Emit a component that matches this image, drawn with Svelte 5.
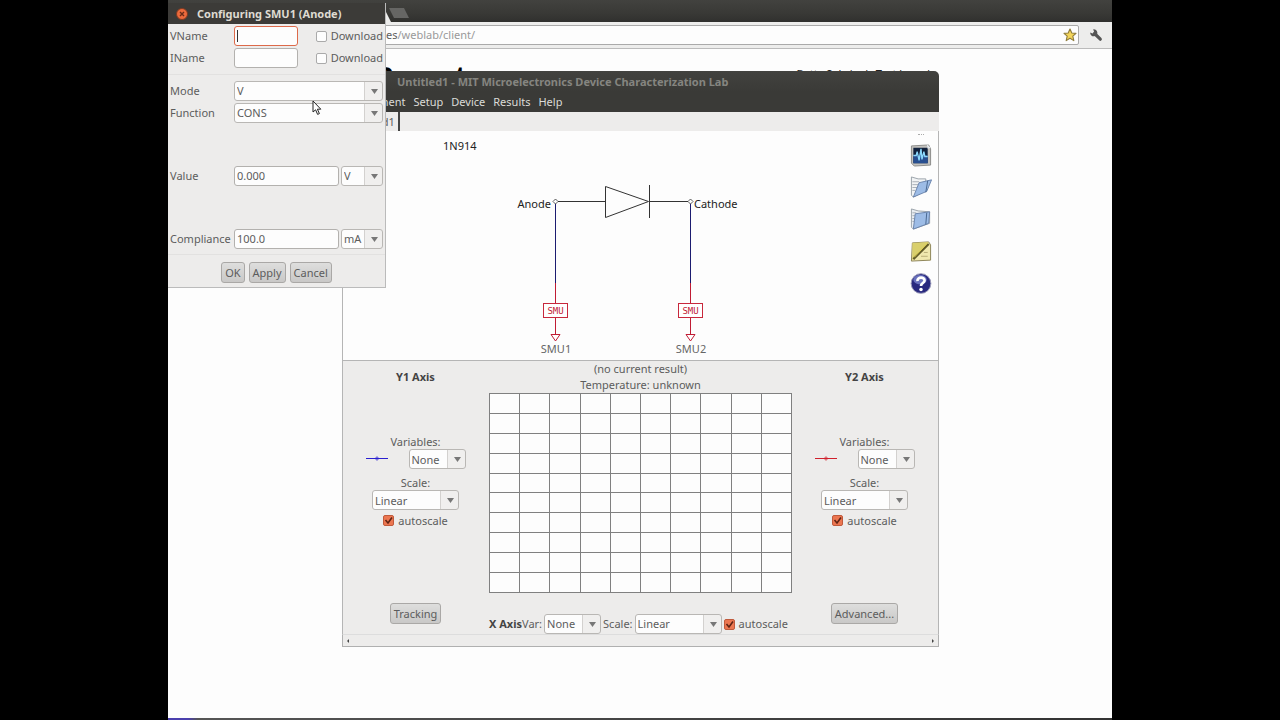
<script>
  let name = $state('Untitled1');
  let axes = $state([
    { id: 'y1', title: 'Y1 Axis', color: '#2a1fd0', action: 'Tracking', auto: true },
    { id: 'y2', title: 'Y2 Axis', color: '#d0202c', action: 'Advanced...', auto: true }
  ]);
  let xAuto = $state(true);
  const smus = [
    { x: 212, label: 'SMU1' },
    { x: 347, label: 'SMU2' }
  ];
  const menus = ['Experiment', 'Setup', 'Device', 'Results', 'Help'];
  const cells = Array.from({ length: 100 });
</script>

{#snippet axisPanel(axis)}
  <section class="axis">
    <h2>{axis.title}</h2>
    <div class="axis-controls">
      <label for="{axis.id}-var">Variables:</label>
      <div class="variable">
        <svg width="22" height="8" viewBox="0 0 22 8" aria-hidden="true">
          <path d="M0 3.5H22" stroke={axis.color} />
          <path d="M11 1L13.5 3.5L11 6L8.5 3.5Z" fill={axis.color} opacity="0.55" />
        </svg>
        <select id="{axis.id}-var" class="short"><option>None</option></select>
      </div>
      <label for="{axis.id}-scale" class="spaced">Scale:</label>
      <select id="{axis.id}-scale" class="long"><option>Linear</option></select>
      <label class="check"><input type="checkbox" bind:checked={axis.auto} />autoscale</label>
    </div>
    <button class="push">{axis.action}</button>
  </section>
{/snippet}

<main class="desktop">
  <div class="browser">
    <div class="tabstrip">
      <div class="tab"></div>
      <div class="new-tab"></div>
    </div>
    <div class="toolbar">
      <div class="address">
        <span>es</span>
        <input aria-label="Address" value="/weblab/client/" />
        <svg width="14" height="14" viewBox="0 0 14 14" aria-hidden="true">
          <path d="M7 1L8.8 5L13 5.4L9.8 8.2L10.8 12.6L7 10.3L3.2 12.6L4.2 8.2L1 5.4L5.2 5Z" fill="#f3d55b" stroke="#8d7a3a" stroke-width="1.1" stroke-linejoin="round" />
        </svg>
      </div>
      <button class="wrench" aria-label="Settings">
        <svg width="14" height="14" viewBox="0 0 14 14">
          <path d="M5.5 5.5L11.3 11.2" stroke="#555" stroke-width="3.2" stroke-linecap="round" />
          <path d="M4.2 1.2A3.6 3.6 0 1 1 1.2 4.4L3.6 5.4L5.1 3.9Z" fill="#555" />
        </svg>
      </button>
    </div>
    <div class="page">
      <h1>Remote</h1>
      <p>Betty Sabrina's Test board</p>
    </div>
    <div class="panel-edge"></div>
  </div>

  <div class="window lab">
    <header class="lab-title">{name} - MIT Microelectronics Device Characterization Lab</header>
    <nav class="menubar">
      {#each menus as menu}<button>{menu}</button>{/each}
    </nav>
    <div class="doc-tabs"><span>{name}</span></div>
    <div class="schematic">
      <svg class="circuit" viewBox="0 0 560 229" role="img" aria-label="1N914 diode circuit">
        <text x="100" y="19">1N914</text>
        <g fill="none" stroke="#333" shape-rendering="crispEdges">
          <path d="M215 70.5H262M306 70.5H345M306.5 54V87" />
        </g>
        <path d="M262.5 55.5V86.5L305.5 70.5Z" fill="none" stroke="#333" />
        <text x="208" y="77" text-anchor="end">Anode</text>
        <text x="351" y="77">Cathode</text>
        {#each smus as smu}
          <g transform="translate({smu.x} 0)">
            <g shape-rendering="crispEdges">
              <path d="M.5 73V152" stroke="#1c1c70" />
              <path d="M.5 152V172M.5 187V203" stroke="#c01c34" />
            </g>
            <path d="M.5 68L3 70.5L.5 73L-2 70.5Z" fill="#fff" stroke="#333" stroke-width=".8" />
            <rect x="-11.5" y="172.5" width="24" height="14" fill="#fff" stroke="#c8283c" />
            <text x="0.5" y="183" text-anchor="middle" class="smu">SMU</text>
            <path d="M-4 203.5H5L.5 210Z" fill="#fff" stroke="#c01c34" />
            <text x="1" y="222" text-anchor="middle" class="muted">{smu.label}</text>
          </g>
        {/each}
      </svg>
      <div class="tools">
        <span class="grip"></span>
        <button aria-label="Run measurement">
          <svg viewBox="0 0 22 24">
            <path d="M1 2L19 1L21 5V22L4 23L1 20Z" fill="#c4c3bf" stroke="#8a8a88" />
            <path d="M3 4H18V20H3Z" fill="#10213d" />
            <path d="M3 12H18V20H3Z" fill="#284f90" />
            <path d="M3 12H6L7 8L9 17L11 5L12 16L14 8L15 13H18" fill="none" stroke="#8bd8fc" stroke-width="1.4" />
            <path d="M17 0L21 4L18 5Z" fill="#e5eaf0" />
          </svg>
        </button>
        <button aria-label="Open setup">
          <svg viewBox="0 0 22 24">
            <path d="M1 1L8 3H16V15L3 22L1 20Z" fill="#f2f4f5" stroke="#9aa2a9" />
            <path d="M2 6H9M2 9H8M2 12H7M2 15H5" stroke="#a6adb5" />
            <path d="M9 7L22 4L17 16L3 22Z" fill="#9dbce6" stroke="#6a84ac" />
            <path d="M18 5L16 17" stroke="#46658e" />
          </svg>
        </button>
        <button aria-label="Save setup">
          <svg viewBox="0 0 22 24">
            <path d="M1 1L8 3L20 4V16L3 22L1 20Z" fill="#e9eef3" stroke="#9aa2a9" />
            <path d="M2 5H6M2 8H5M2 11H5M2 14H4" stroke="#a6adb5" />
            <path d="M5 6L20 4L19 16L3 22Z" fill="#9dbce6" stroke="#6a84ac" />
            <path d="M17 5L16 17" stroke="#46658e" />
          </svg>
        </button>
        <button aria-label="Edit notes">
          <svg viewBox="0 0 22 24">
            <path d="M2 3L19 2L21 5V21L1 22Z" fill="#f0e8ae" stroke="#8b8256" />
            <path d="M2 3L19 2L2 21Z" fill="#d9cf6c" />
            <path d="M19 4L3 20" stroke="#625b28" stroke-width="2.4" />
            <path d="M18 3L4 18" stroke="#e1d155" />
            <path d="M11 17H18M14 13H18" stroke="#b9ae76" />
          </svg>
        </button>
        <button aria-label="Help">
          <svg viewBox="0 0 22 24">
            <circle cx="11" cy="12" r="10.3" fill="#29297f" stroke="#9a9ab8" />
            <ellipse cx="10" cy="8" rx="7" ry="5" fill="#6971bd" />
            <path d="M7.3 9.5C7 4.8 15 4.8 14.7 9C14.5 11.6 11 11.5 11 14.5" fill="none" stroke="#fff" stroke-width="2.8" />
            <circle cx="11" cy="18.2" r="1.8" fill="#fff" />
          </svg>
        </button>
      </div>
    </div>
    <div class="results">
      {@render axisPanel(axes[0])}
      <section class="plot">
        <p>(no current result)</p>
        <p>Temperature: unknown</p>
        <div class="grid">{#each cells as _}<i></i>{/each}</div>
        <div class="x-axis">
          <b>X Axis</b><label for="x-var">Var:</label>
          <select id="x-var" class="short"><option>None</option></select>
          <label for="x-scale">Scale:</label>
          <select id="x-scale" class="long"><option>Linear</option></select>
          <label class="check"><input type="checkbox" bind:checked={xAuto} />autoscale</label>
        </div>
      </section>
      {@render axisPanel(axes[1])}
    </div>
    <div class="scroll"><span class="left"></span><span class="right"></span></div>
  </div>

  <form class="window dialog" onsubmit={(e) => e.preventDefault()}>
    <header>
      <button type="button" class="close" aria-label="Close">
        <svg width="12" height="12" viewBox="0 0 12 12">
          <circle cx="6" cy="6" r="5.5" fill="#ec6a3c" stroke="#7e3a22" />
          <path d="M4 4L8 8M8 4L4 8" stroke="#6a2c18" stroke-width="1.4" />
        </svg>
      </button>
      <span>Configuring SMU1 (Anode)</span>
    </header>
    <div class="group">
      <div class="row">
        <label for="vname">VName</label>
        <input id="vname" class="name focused" type="text" />
        <label class="check"><input type="checkbox" />Download</label>
      </div>
      <div class="row">
        <label for="iname">IName</label>
        <input id="iname" class="name" type="text" />
        <label class="check"><input type="checkbox" />Download</label>
      </div>
    </div>
    <div class="group modes">
      <div class="row"><label for="mode">Mode</label><select id="mode"><option>V</option></select></div>
      <div class="row"><label for="function">Function</label><select id="function"><option>CONS</option></select></div>
      <div class="row far">
        <label for="value">Value</label><input id="value" type="text" value="0.000" />
        <select class="unit" aria-label="Value unit"><option>V</option></select>
      </div>
      <div class="row far">
        <label for="compliance">Compliance</label><input id="compliance" type="text" value="100.0" />
        <select class="unit" aria-label="Compliance unit"><option>mA</option></select>
      </div>
    </div>
    <footer>
      <button class="push">OK</button>
      <button class="push" type="button">Apply</button>
      <button class="push" type="button">Cancel</button>
    </footer>
  </form>

  <svg class="pointer" width="10" height="16" viewBox="0 0 10 16" aria-hidden="true">
    <path d="M1 1V12L3.6 9.8L5.6 14.4L7.4 13.6L5.4 9.2H8.8Z" fill="#fff" stroke="#222" />
  </svg>
</main>

<style>
  :global(body) {
    background: #000;
  }
  * {
    box-sizing: border-box;
  }
  .desktop {
    position: relative;
    height: 100vh;
    aspect-ratio: 59 / 45;
    max-width: 100%;
    margin: 0 auto;
    overflow: hidden;
    background: #fdfdfd;
    color: #5c5c5c;
    font: 11px/16px "Noto Sans", "Open Sans", sans-serif;
  }
  h1, h2, p {
    margin: 0;
  }
  button, input, select {
    margin: 0;
    font: inherit;
    color: inherit;
  }
  button {
    padding: 0;
    border: 0;
    background: none;
  }
  svg {
    display: block;
  }

  .browser {
    display: flex;
    flex-direction: column;
    height: 100%;
  }
  .tabstrip {
    display: flex;
    align-items: flex-end;
    height: 22px;
    background: linear-gradient(#42423f, #393936 60%, #30302e);
  }
  .tab {
    width: 224px;
    height: 14px;
    background: #ededec;
    clip-path: polygon(0 0, 216px 0, 223px 100%, 0 100%);
  }
  .new-tab {
    width: 20px;
    height: 10px;
    margin: 0 0 4px -3px;
    background: #666664;
    clip-path: polygon(0 0, 15px 0, 100% 100%, 5px 100%);
  }
  .toolbar {
    display: flex;
    align-items: center;
    gap: 10px;
    height: 27px;
    padding: 0 9px 0 100px;
    border-bottom: 1px solid #bbb;
    background: #ededec;
  }
  .address {
    display: flex;
    flex: 1;
    align-items: center;
    height: 20px;
    padding: 0 1px 0 117px;
    border: 1px solid #aaa;
    border-radius: 2px;
    background: #fdfdfd;
  }
  .address input {
    flex: 1;
    padding: 0;
    border: 0;
    outline: 0;
    background: none;
    color: #999;
  }
  .page {
    display: flex;
    flex: 1;
    justify-content: space-between;
    align-items: flex-start;
    padding: 11px 182px 0 204px;
    color: #222;
  }
  .page h1 {
    color: #000;
    font: bold 30px/34px "Liberation Sans", Arial, sans-serif;
  }
  .page p {
    padding-top: 6px;
  }
  .panel-edge {
    height: 2px;
    background: linear-gradient(90deg, #4b3fae 20px, #555 30px, #333);
  }

  .window {
    position: absolute;
    background: #edeceb;
  }
  .lab {
    top: 71px;
    left: 174px;
    width: 597px;
    border-radius: 5px 5px 0 0;
    overflow: hidden;
  }
  .lab-title {
    height: 21px;
    padding-left: 55px;
    background: linear-gradient(#42423f, #3a3a37);
    color: #858580;
    font-weight: bold;
    line-height: 21px;
  }
  .menubar {
    display: flex;
    gap: 8px;
    height: 20px;
    padding-left: 4px;
    background: #3a3a37;
    color: #dcdcd8;
  }
  .doc-tabs {
    display: flex;
    height: 19px;
    background: #edeceb;
  }
  .doc-tabs span {
    width: 58px;
    padding: 2px 5px 0;
    border-right: 2px solid #444;
    text-align: right;
  }
  .schematic {
    display: flex;
    border: 1px solid #b5b5b5;
    border-top: 0;
    background: #fdfdfd;
  }
  .circuit {
    flex: 1;
    min-width: 0;
    fill: #222;
  }
  .circuit .smu {
    fill: #c01c34;
    font: 9px "DejaVu Sans Mono", monospace;
  }
  .circuit .muted {
    fill: #666;
  }
  .tools {
    display: flex;
    flex-direction: column;
    align-items: center;
    gap: 9px;
    width: 35px;
    padding-top: 3px;
  }
  .tools .grip {
    width: 6px;
    border-top: 1px dotted #aaa;
  }
  .tools svg {
    width: 22px;
    height: 23px;
  }
  .results {
    display: grid;
    grid-template-columns: 1fr 303px 1fr;
    height: 273px;
    border: 1px solid #b5b5b5;
    border-width: 0 1px;
  }
  .axis {
    display: flex;
    flex-direction: column;
    align-items: center;
    padding: 8px 1px 10px 0;
  }
  h2 {
    font-size: 11px;
    line-height: 16px;
    color: #444;
  }
  .axis-controls {
    display: flex;
    flex-direction: column;
    align-items: center;
    width: 100px;
    margin: 49px 0 auto;
    line-height: 15px;
  }
  .variable {
    display: flex;
    justify-content: space-between;
    align-items: center;
    width: 100%;
  }
  .spaced {
    margin-top: 6px;
  }
  select {
    height: 20px;
    padding: 0 20px 0 2px;
    border: 1px solid #b9b7b4;
    border-radius: 3px;
    outline: 0;
    appearance: none;
    background:
      url("data:image/svg+xml,%3Csvg xmlns='http://www.w3.org/2000/svg' width='7' height='5'%3E%3Cpath d='M0 0H7L3.5 5Z' fill='%23777'/%3E%3C/svg%3E") right 4px center no-repeat,
      linear-gradient(90deg, #d3d1cf 1px, #f0efee 1px) right / 18px 100% no-repeat,
      #fdfdfd;
  }
  .short {
    width: 57px;
  }
  .long {
    width: 87px;
  }
  .check {
    display: flex;
    align-items: center;
    gap: 4px;
    height: 20px;
  }
  .check input {
    width: 11px;
    height: 11px;
    border: 1px solid #aaa;
    border-radius: 2px;
    appearance: none;
    background: #fdfdfd;
  }
  .check input:checked {
    border-color: #c05a3c;
    background: url("data:image/svg+xml,%3Csvg xmlns='http://www.w3.org/2000/svg' width='9' height='9'%3E%3Cpath d='M1.5 4L4 7L8 1.5' fill='none' stroke='%23602414' stroke-width='1.6'/%3E%3C/svg%3E") center no-repeat, #ec7650;
  }
  .push {
    height: 21px;
    padding: 0 3px;
    border: 1px solid #aaa8a6;
    border-radius: 3px;
    background: linear-gradient(#dededd, #c9c8c7);
  }
  .plot {
    text-align: center;
  }
  .grid {
    display: grid;
    grid-template: repeat(10, 1fr) / repeat(10, 1fr);
    gap: 1px;
    height: 200px;
    margin-bottom: 21px;
    padding: 1px;
    background: #808080;
  }
  .grid i {
    background: #fdfdfd;
  }
  .x-axis {
    display: flex;
    align-items: center;
    gap: 2px;
    height: 20px;
    white-space: nowrap;
  }
  .x-axis b {
    margin-right: -2px;
    color: #444;
  }
  .scroll {
    display: flex;
    justify-content: space-between;
    align-items: center;
    height: 13px;
    padding: 0 4px;
    border: 1px solid #b0b0b0;
    border-top-color: #ddd;
  }
  .scroll span {
    border: 2px solid transparent;
  }
  .scroll .left {
    border-left-width: 0;
    border-right-color: #444;
  }
  .scroll .right {
    border-right-width: 0;
    border-left-color: #444;
  }

  .dialog {
    top: 3px;
    left: 0;
    width: 218px;
    border: 1px solid #bbb;
    border-width: 0 1px 1px 0;
  }
  .dialog header {
    display: flex;
    align-items: center;
    gap: 9px;
    height: 21px;
    padding-left: 8px;
    background: #3c3b38;
    color: #dfdbd2;
    font-weight: bold;
    white-space: nowrap;
  }
  .group {
    padding: 1px 2px 5px;
    border-bottom: 1px solid #e2e1e0;
  }
  .modes {
    padding: 5px 2px 4px;
  }
  .row {
    display: grid;
    grid-template-columns: 64px 1fr auto;
    align-items: center;
    height: 22px;
  }
  .far {
    margin-top: 41px;
  }
  .row select:not(.unit) {
    grid-column: 2 / 4;
  }
  .unit {
    width: 42px;
    margin-left: 2px;
  }
  .row input[type="text"] {
    width: 100%;
    min-width: 0;
    height: 20px;
    padding: 0 2px 1px;
    border: 1px solid #b3b1ae;
    border-radius: 3px;
    outline: 0;
    background: #fdfdfd;
  }
  .row input.name {
    width: 64px;
  }
  .row input.focused {
    border-color: #dd6a4a;
    background: linear-gradient(#333, #333) 2px center / 1px 12px no-repeat, #fdfdfd;
  }
  footer {
    display: flex;
    justify-content: center;
    gap: 4px;
    padding: 7px 0 4px;
  }
  .pointer {
    position: absolute;
    top: 100px;
    left: 144px;
  }
</style>
